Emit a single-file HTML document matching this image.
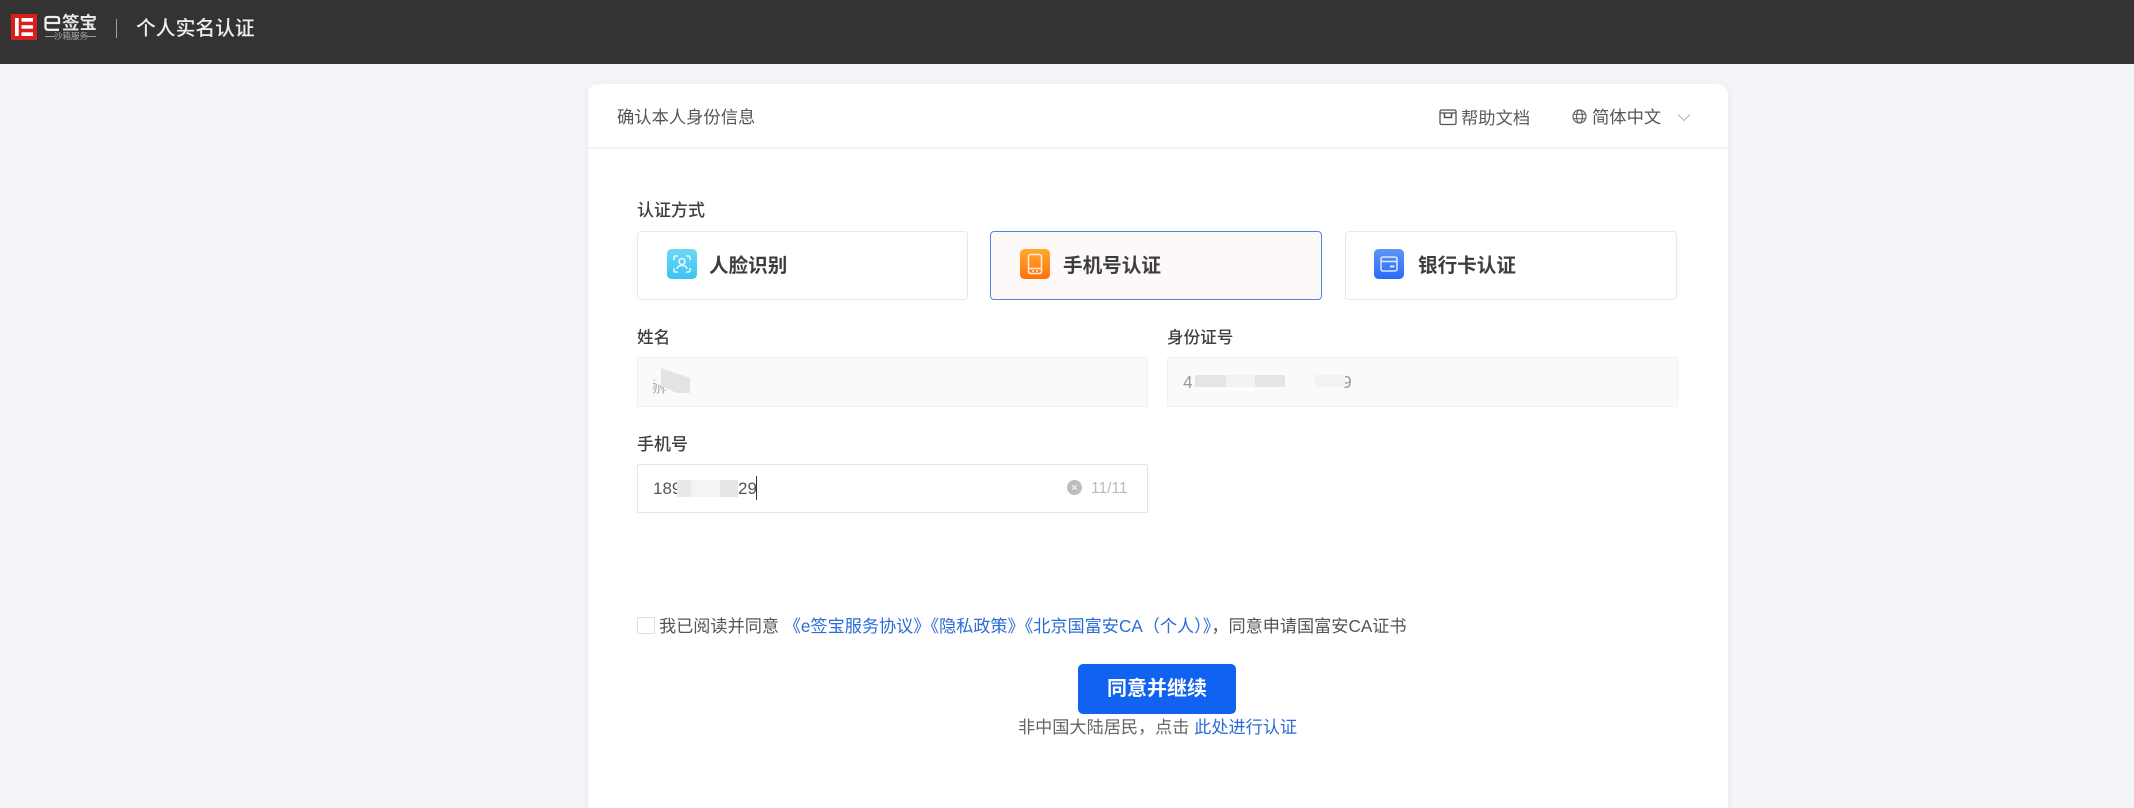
<!DOCTYPE html>
<html lang="zh-CN">
<head>
<meta charset="utf-8">
<title>个人实名认证</title>
<style>
html,body{margin:0;padding:0;width:2134px;height:808px;overflow:hidden;background:#f3f5f9;}
body{position:relative;font-family:"Liberation Sans","Noto Sans CJK SC",sans-serif;color:#444;}
#w{position:absolute;left:0;top:0;width:2134px;height:808px;overflow:hidden;filter:blur(.35px);}
.a{position:absolute;display:block;box-sizing:border-box;}
.t{position:absolute;white-space:nowrap;line-height:24px;height:24px;font-size:17.3px;}
.opt{position:absolute;box-sizing:border-box;top:231px;height:69px;border:1.5px solid #e9e9ec;border-radius:4px;background:#fff;}
.ot{font-size:19.6px;font-weight:700;color:#3d3d3d;top:254px;}
.lb{font-size:16.6px;color:#3f3f3f;font-weight:500;}
.ro{position:absolute;box-sizing:border-box;top:357px;height:50px;background:#fafafa;border:1px solid #f1f1f3;border-radius:2px;}
a{color:#2b6cd8;text-decoration:none;}
svg{position:absolute;display:block;}
</style>
</head>
<body>
<div id="w">
<div class="a" style="left:0;top:0;width:2134px;height:64px;background:#333;"></div>

<svg style="left:11px;top:14px" width="26" height="26" viewBox="0 0 26 26">
  <rect width="26" height="26" fill="#d81f1f"/>
  <rect x="4" y="4" width="3.700" height="18" fill="#fff"/>
  <rect x="10.500" y="4" width="11.500" height="3.700" fill="#fff"/>
  <rect x="10.500" y="11.200" width="11.500" height="3.500" fill="#fff"/>
  <rect x="10.500" y="18.300" width="11.500" height="3.700" fill="#fff"/>
</svg>
<svg style="left:44px;top:15px" width="17" height="17" viewBox="0 0 17 17">
  <path d="M1.500 8H15V4.500Q15 2 12.500 2H4Q1.500 2 1.500 4.500V12Q1.500 14.800 4 14.800H15" fill="none" stroke="#eee" stroke-width="2.300"/>
</svg>
<span class="t" style="left:62px;top:11px;font-size:17.500px;font-weight:700;color:#e8e8e8;letter-spacing:0;">签宝</span>
<div class="a" style="left:45px;top:36px;width:10px;height:1px;background:#999;"></div>
<span class="t" style="left:54px;top:24px;font-size:8.500px;color:#aaa;">沙箱服务</span>
<div class="a" style="left:87px;top:36px;width:9px;height:1px;background:#999;"></div>
<div class="a" style="left:115.500px;top:19px;width:1.500px;height:19px;background:#a99f83;"></div>
<span class="t" style="left:136px;top:17px;font-size:19.800px;font-weight:500;color:#eee;">个人实名认证</span>

<div class="a" style="left:588px;top:84px;width:1140px;height:760px;background:#fff;border-radius:10px;box-shadow:0 1px 8px rgba(40,50,80,.07);"></div>
<div class="a" style="left:588px;top:147px;width:1140px;height:1.500px;background:#f3f3f5;"></div>

<span class="t" style="left:617px;top:105px;color:#555;">确认本人身份信息</span>

<svg style="left:1439px;top:108px" width="18" height="18" viewBox="0 0 18 18" fill="none" stroke="#555" stroke-width="1.300">
  <rect x="1" y="2" width="16" height="14.500" rx="1.500"/>
  <path d="M1 5H17"/>
  <path d="M5.500 5.500V9.500H12.500V5.500" stroke-width="1.500"/>
</svg>
<span class="t" style="left:1461px;top:105.500px;color:#5c5c5c;">帮助文档</span>
<svg style="left:1572px;top:109px" width="15" height="15" viewBox="0 0 15 15" fill="none" stroke="#666" stroke-width="1.200">
  <circle cx="7.500" cy="7.500" r="6.500"/>
  <ellipse cx="7.500" cy="7.500" rx="3" ry="6.500"/>
  <path d="M1 5.300H14M1 9.700H14"/>
</svg>
<span class="t" style="left:1592px;top:105px;color:#555;">简体中文</span>
<svg style="left:1677px;top:113px" width="14" height="9" viewBox="0 0 14 9" fill="none" stroke="#bbb" stroke-width="1.200">
  <path d="M1 1.500L7 7.500L13 1.500"/>
</svg>

<span class="t lb" style="left:637px;top:199px;font-size:17px;">认证方式</span>

<div class="opt" style="left:637px;width:331px;"></div>
<svg style="left:667px;top:249px" width="30" height="30" viewBox="0 0 30 30">
  <defs><linearGradient id="g1" x1="0" y1="0" x2="0" y2="1"><stop offset="0" stop-color="#6fd8f5"/><stop offset="1" stop-color="#3cc3f3"/></linearGradient></defs>
  <rect width="30" height="30" rx="4.500" fill="url(#g1)"/>
  <g fill="none" stroke="#e6f8fe" stroke-width="1.500">
    <path d="M7 11V8.500Q7 7 8.500 7H11M19 7H21.500Q23 7 23 8.500V11M23 19V21.500Q23 23 21.500 23H19M11 23H8.500Q7 23 7 21.500V19"/>
    <circle cx="15" cy="12.500" r="3"/>
    <path d="M10 20Q10.500 16.500 15 16.500Q19.500 16.500 20 20"/>
  </g>
</svg>
<span class="t ot" style="left:709px;">人脸识别</span>

<div class="opt" style="left:990px;width:332px;border:1.500px solid #4f86e6;background:#fdf9f8;"></div>
<svg style="left:1020px;top:249px" width="30" height="30" viewBox="0 0 30 30">
  <defs><linearGradient id="g2" x1="0" y1="0" x2="0" y2="1"><stop offset="0" stop-color="#ffab2e"/><stop offset="1" stop-color="#ff7010"/></linearGradient></defs>
  <rect width="30" height="30" rx="4.500" fill="url(#g2)"/>
  <g fill="none" stroke="#ffeeda" stroke-width="1.500">
    <rect x="8.500" y="5.500" width="13" height="19" rx="2"/>
    <path d="M8.500 19.500H21.500"/>
    <path d="M12 22H14M16 22H18"/>
  </g>
</svg>
<span class="t ot" style="left:1063px;">手机号认证</span>

<div class="opt" style="left:1345px;width:332px;"></div>
<svg style="left:1374px;top:249px" width="30" height="30" viewBox="0 0 30 30">
  <defs><linearGradient id="g3" x1="0" y1="0" x2="0" y2="1"><stop offset="0" stop-color="#5c96f6"/><stop offset="1" stop-color="#2d69fb"/></linearGradient></defs>
  <rect width="30" height="30" rx="4.500" fill="url(#g3)"/>
  <g fill="none" stroke="#dbe8fe" stroke-width="1.500">
    <rect x="7" y="8" width="16" height="14" rx="2"/>
    <path d="M7 12.500H23"/>
  </g>
  <rect x="16" y="16.500" width="4.500" height="2" fill="#dbe8fe"/>
</svg>
<span class="t ot" style="left:1418px;">银行卡认证</span>

<span class="t lb" style="left:637px;top:326px;">姓名</span>
<span class="t lb" style="left:1167px;top:326px;">身份证号</span>

<div class="ro" style="left:637px;width:511px;"></div>
<span class="t" style="left:652px;top:375px;color:#aaa;font-size:17px;width:14px;overflow:hidden;">郝</span>
<svg style="left:655px;top:366px" width="38" height="30" viewBox="0 0 38 30">
  <path d="M0 8L5 2H7L35 12V27H22L0 17Z" fill="#fafafa"/>
  <path d="M6 2L35 12V27H22L6 20Z" fill="#e4e4e4"/>
</svg>

<div class="ro" style="left:1167px;width:511px;"></div>
<span class="t" style="left:1183px;top:370px;color:#999;">4</span>
<span class="t" style="left:1342px;top:370px;color:#999;">9</span>
<div class="a" style="left:1195px;top:375px;width:31px;height:12px;background:#e5e5e5;"></div>
<div class="a" style="left:1195px;top:387px;width:31px;height:5px;background:#fcfcfc;"></div>
<div class="a" style="left:1226px;top:375px;width:30px;height:12px;background:#f3f3f3;"></div>
<div class="a" style="left:1226px;top:387px;width:28px;height:4px;background:#fefefe;"></div>
<div class="a" style="left:1255px;top:375px;width:30px;height:12px;background:#e5e5e5;"></div>
<div class="a" style="left:1315px;top:375px;width:30px;height:12px;background:#f2f2f2;"></div>

<span class="t lb" style="left:637px;top:433px;font-size:17px;">手机号</span>

<div class="a" style="left:637px;top:464px;width:511px;height:49px;background:#fff;border:1.500px solid #e3e4ec;border-radius:2px;"></div>
<span class="t" style="left:653px;top:477px;color:#555;font-size:17px;width:26px;overflow:hidden;">189</span>
<span class="t" style="left:738px;top:477px;color:#555;font-size:17px;">29</span>
<div class="a" style="left:677px;top:480px;width:14px;height:17px;background:#e8e8e8;border-radius:2px 0 0 2px;"></div>
<div class="a" style="left:691px;top:480px;width:29px;height:17px;background:#f4f4f4;"></div>
<div class="a" style="left:720px;top:480px;width:18px;height:17px;background:#e6e6e6;"></div>
<div class="a" style="left:755.500px;top:476px;width:1.500px;height:24px;background:#333;"></div>
<svg style="left:1066.500px;top:480px" width="15" height="15" viewBox="0 0 15 15">
  <circle cx="7.500" cy="7.500" r="7.500" fill="#bcbcbc"/>
  <path d="M5.200 5.200L9.800 9.800M9.800 5.200L5.200 9.800" stroke="#f5f5f5" stroke-width="1.200"/>
</svg>
<span class="t" style="left:1091px;top:477px;font-size:15.500px;color:#bbb;">11/11</span>

<div class="a" style="left:637px;top:617px;width:18px;height:17px;background:#fff;border:1.500px solid #dcdcdc;border-radius:2px;"></div>
<span class="t" style="left:659px;top:614px;color:#555;font-size:17.150px;">我已阅读并同意 <a>《e签宝服务协议》《隐私政策》《北京国富安CA（个人）》</a>，同意申请国富安CA证书</span>

<div class="a" style="left:1078px;top:664px;width:158px;height:50px;background:#1162f0;border-radius:5px;"></div>
<span class="t" style="left:1078px;width:158px;text-align:center;top:677px;font-size:20px;font-weight:700;color:#fff;">同意并继续</span>
<span class="t" style="left:1018px;top:715px;color:#666;font-size:17.150px;">非中国大陆居民，点击 <a>此处进行认证</a></span>
</div>
</body>
</html>
